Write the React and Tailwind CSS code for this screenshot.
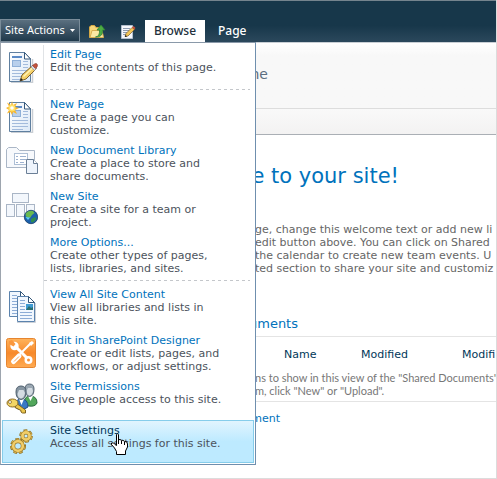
import React from "react";

const blue = "text-[#0072bc]";

function PageSheet({ x = 0, y = 0 }) {
  return (
    <g transform={`translate(${x} ${y})`}>
      <path d="M2 30.5H23.5V7" fill="none" stroke="#c9ced4" strokeWidth="1.5" />
      <path d="M.5.5H15.5L21.5 7V29.5H.5Z" fill="url(#sheet)" stroke="#5f7f9f" />
      <path d="M15.5.5V7H21.5Z" fill="#fff" stroke="#34577a" />
      <path d="M3 5H13" stroke="#5b8ac6" strokeWidth="2" />
      <rect x="3.5" y="8.5" width="8" height="6" fill="#b9d0ec" stroke="#8fb0d8" />
      <path d="M14 9.5H19M14 12.5H19M14 15.5H19M3 18.5H19M3 21.5H19M3 24.5H19M3 27.5H14" stroke="#a3bbdc" />
    </g>
  );
}

function EditPageIcon() {
  return (
    <svg width="32" height="32" viewBox="0 0 32 32" aria-hidden="true">
      <defs>
        <linearGradient id="sheet" x1="0" y1="0" x2="1" y2="1">
          <stop offset="0" stopColor="#ffffff" />
          <stop offset="1" stopColor="#dce9f7" />
        </linearGradient>
      </defs>
      <PageSheet x={3} y={1} />
      <path d="M14 30L16 24L27 14L30.500 17.500L20 28Z" fill="#f5d069" stroke="#80622c" />
      <path d="M17.500 25.500L27.500 16" stroke="#fff3b4" strokeWidth="1.500" />
      <path d="M25 16L27 14L30.500 17.500L28.500 19.500Z" fill="#d9dce2" stroke="#8a8c92" strokeWidth=".6" />
      <path d="M26.500 14.500L28.500 13Q30 12 31 13T31 16L29.500 17.500Z" fill="#c6533c" stroke="#8a3c30" strokeWidth=".7" />
      <path d="M14 30L15 27L17 29Z" fill="#222" />
    </svg>
  );
}

function NewPageIcon() {
  return (
    <svg width="32" height="32" viewBox="0 0 32 32" aria-hidden="true">
      <PageSheet x={3} y={1} />
      <path d="M6 0L7 4L11 2L9 6L13 7L9 9L11 13L7 11L6 14L4.500 11L1 12.500L3 9L0 7L3 5.500L1 1.500L5 4Z" fill="#f8b62c" />
      <circle cx="6" cy="7" r="3.500" fill="#ffe169" />
      <circle cx="6" cy="7" r="1.800" fill="#fff" />
    </svg>
  );
}

function LibraryIcon() {
  return (
    <svg width="32" height="32" viewBox="0 0 32 32" aria-hidden="true">
      <path d="M.5 20.500V2.500L2.500 .5H10.500L13.500 3.500H28.500V20.500Z" fill="#f7f9fc" stroke="#aab6c6" />
      <rect x="8.500" y="6.500" width="13" height="11" fill="#fff" stroke="#aebfd5" />
      <path d="M10 9.500H12M10 12.500H12M10 15.500H12M14 9.500H20M14 12.500H20M14 15.500H18" stroke="#9db2d0" />
      <path d="M20.500 12.500H27.500L31.500 16.500V26.500H20.500Z" fill="#eef4fc" stroke="#6b7f96" />
      <path d="M27.500 12.500V16.500H31.500" fill="#fff" stroke="#6b7f96" />
    </svg>
  );
}

function NewSiteIcon() {
  return (
    <svg width="32" height="32" viewBox="0 0 32 32" aria-hidden="true">
      <g fill="#f3f7fc" stroke="#aab6c6">
        <rect x="6.500" y=".5" width="16" height="9" />
        <rect x=".5" y="11.500" width="8" height="12" />
        <rect x="10.500" y="11.500" width="8" height="12" />
        <rect x="20.500" y="11.500" width="8" height="12" />
      </g>
      <circle cx="25" cy="24" r="6.700" fill="#1c61ad" stroke="#173c66" strokeWidth=".8" />
      <path d="M20 20Q23 17 27 18L28.500 20L26 22L24 25L20.500 24L19.500 22Z" fill="#69b94f" />
      <path d="M25 26L29 24L30.500 26L27 29.500L25 29Z" fill="#2f8c4e" />
      <path d="M19.500 24L24 24.500L22 27Z" fill="#5fd0f0" />
    </svg>
  );
}

function ContentIcon() {
  const sheet = (
    <>
      <path d="M.5.5H11.500L17.500 6.500V25.500H.5Z" fill="#f1f7fe" stroke="#5b83ad" />
      <path d="M11.500.5V6.500H17.500Z" fill="#fff" stroke="#34577a" />
      <path d="M3 4.500H8M3 7.500H8M3 10.500H8M3 13.500H8M3 16.500H15M3 19.500H15M3 22.500H15" stroke="#8cacd6" />
      <rect x="9" y="8" width="7" height="6" fill="#3e9bd2" />
      <path d="M9 14L12 10L14 12L16 11V14Z" fill="#2b6f70" />
    </>
  );
  return (
    <svg width="32" height="32" viewBox="0 0 32 32" aria-hidden="true">
      <path d="M11 31.500H29.500V12" fill="none" stroke="#ccd1d8" />
      <g transform="translate(3 0)">{sheet}</g>
      <g transform="translate(11 5)">{sheet}</g>
    </svg>
  );
}

function DesignerIcon() {
  return (
    <svg width="32" height="32" viewBox="0 0 32 32" aria-hidden="true">
      <defs>
        <linearGradient id="orange" x1="0" y1="0" x2="0" y2="1">
          <stop offset="0" stopColor="#ffb45c" />
          <stop offset=".5" stopColor="#f7892b" />
          <stop offset="1" stopColor="#ffab52" />
        </linearGradient>
      </defs>
      <rect x=".5" y="1.500" width="29" height="29" rx="2" fill="url(#orange)" stroke="#e6852f" />
      <path d="M9 9L22 22" stroke="#fff" strokeWidth="3" />
      <circle cx="8.500" cy="9" r="4.200" fill="#fff" />
      <path d="M3 4L6 3L9.500 7L7.500 9.500L3 7Z" fill="#fa983f" />
      <circle cx="22.500" cy="23" r="4" fill="#fff" />
      <circle cx="22.500" cy="23" r="1.500" fill="#f7923a" />
      <path d="M25 6L14 17" stroke="#fff" strokeWidth="2" />
      <path d="M23 6L26 4L28 6L25 9Z" fill="#fff" />
      <path d="M13 19L7.500 24.500" stroke="#fff" strokeWidth="5" strokeLinecap="round" />
      <path d="M13 19.500L8 24.500" stroke="#f7a258" />
    </svg>
  );
}

function PermissionsIcon() {
  return (
    <svg width="32" height="32" viewBox="0 0 32 32" aria-hidden="true">
      <path d="M18 21Q18 13 24 13Q31 13 31 20Q29 24 23 23Z" fill="#52a75b" stroke="#2d6c42" />
      <path d="M22 13L24.500 18L27 13Z" fill="#fff" />
      <path d="M19 6Q19 1 23.500 1Q28 1 28 6Q28 13 23.500 13.500Q19 13 19 6Z" fill="#9aa7b2" stroke="#536270" />
      <path d="M20.500 8L22 5H26L27 8Q26 12 23.500 12.500Q21 12 20.500 8Z" fill="#d3dbe1" />
      <path d="M9 24Q9 16 15 16Q22 16 22 24Q18 28 12 26Z" fill="#3978c4" stroke="#23508c" />
      <path d="M13 16L15.500 22L18 16Z" fill="#fff" />
      <path d="M10 9Q10 3 15 3Q20 3 20 9Q20 16 15 16.500Q10 16 10 9Z" fill="#8796a2" stroke="#4c5d6c" />
      <path d="M11.500 11L13 7H17.500L19 10Q18 15 15 15.500Q12 15 11.500 11Z" fill="#d4dce2" />
      <path d="M10 20L19.500 27V30H16.500L15 29V27.500L13 26.500L9 24.500Z" fill="#eac64e" stroke="#806420" />
      <ellipse cx="6.500" cy="20" rx="5.500" ry="4" fill="#f2d565" stroke="#8d6b22" />
      <circle cx="4" cy="19" r="1.500" fill="#fff" stroke="#8d6b22" strokeWidth=".8" />
    </svg>
  );
}

function Gear({ x, y, r }) {
  return (
    <g transform={`translate(${x} ${y})`}>
      <circle r={r + 1.5} fill="none" stroke="#8f7226" strokeWidth="3.500" strokeDasharray="3.300 2" />
      <circle r={r + 1.3} fill="none" stroke="#eec65b" strokeWidth="2.500" strokeDasharray="2.600 2.650" strokeDashoffset="-.3" />
      <circle r={r} fill="none" stroke="#967728" strokeWidth="4" />
      <circle r={r} fill="none" stroke="#f1cd68" strokeWidth="2.700" />
    </g>
  );
}

function SettingsIcon() {
  return (
    <svg width="32" height="32" viewBox="0 0 32 32" aria-hidden="true">
      <Gear x={20} y={10} r={3.6} />
      <Gear x={12} y={20} r={4.8} />
    </svg>
  );
}

function FolderUpIcon() {
  return (
    <svg width="17" height="16" viewBox="0 0 17 16" aria-hidden="true">
      <path d="M.5 13.500V3L2 1.500H5.500L7 3.500H13.500V13.500Z" fill="#f6d77a" stroke="#d5a845" />
      <path d="M1 13.500L3 6.500H13L14.500 13.500Z" fill="#fbe8a4" stroke="#d8ae50" />
      <path d="M6.500 13Q11 12.500 10.500 6H8L12 1L16 6H13.500Q14 13.500 6.500 13Z" fill="#4dad43" stroke="#2e8038" strokeWidth=".8" />
    </svg>
  );
}

function EditIcon() {
  return (
    <svg width="16" height="16" viewBox="0 0 16 16" aria-hidden="true">
      <path d="M1.500 1.500H12.500V14.500H1.500Z" fill="#f5f8fc" stroke="#b3bfce" />
      <path d="M3 4.500H10M3 6.500H9M3 8.500H7M3 10.500H6" stroke="#8d9bb0" />
      <path d="M5 12.500L6 9.500L12 3.500L14.500 5.500L8 12Z" fill="#f2c557" stroke="#795d30" strokeWidth=".7" />
      <path d="M12 3.500L13.500 2L15.500 4L14 5.500Z" fill="#c6533c" />
      <path d="M5 13L5.500 11L7 12.500Z" fill="#111" />
    </svg>
  );
}

function HandPointer() {
  return (
    <svg className="pointer-events-none absolute left-[110px] top-[390px]" width="17" height="22" viewBox="0 0 17 22" aria-hidden="true">
      <path d="M5.500 1.500Q6.500 0 7.500 1.500V7Q9 5.500 10.500 7.500Q12 6.500 13.500 8.500Q16.500 8 16.500 11V14L14.500 18V21.500H5.500V18.500L3.500 15L.5 11.500V10Q2.500 9 4 11.500L5.500 12.500Z" fill="#fff" stroke="#000" />
      <path d="M7.500 7V11M10.500 8V11M13.500 9V12" stroke="#000" />
    </svg>
  );
}

const groups = [
  [{ title: "Edit Page", text: "Edit the contents of this page.", Icon: EditPageIcon }],
  [
    { title: "New Page", text: "Create a page you can customize.", Icon: NewPageIcon },
    { title: "New Document Library", text: "Create a place to store and share documents.", Icon: LibraryIcon },
    { title: "New Site", text: "Create a site for a team or project.", Icon: NewSiteIcon },
    { title: "More Options...", text: "Create other types of pages, lists, libraries, and sites." },
  ],
  [
    { title: "View All Site Content", text: "View all libraries and lists in this site.", Icon: ContentIcon },
    { title: "Edit in SharePoint Designer", text: "Create or edit lists, pages, and workflows, or adjust settings.", Icon: DesignerIcon },
    { title: "Site Permissions", text: "Give people access to this site.", Icon: PermissionsIcon },
    { title: "Site Settings", text: "Access all settings for this site.", Icon: SettingsIcon, active: true },
  ],
];

function MenuItem({ title, text, Icon, active }) {
  return (
    <a
      href="#"
      className={
        "flex min-h-[43px] " +
        (active
          ? "bg-linear-to-b from-[#e3f5fe] to-[#bdeaff] to-50% outline outline-1 -outline-offset-1 outline-[#86cdeb]"
          : "")
      }
    >
      <span className={"w-[42px] shrink-0 pl-1 pt-[6px] " + (active ? "" : "border-r border-[#e0e3e6]")}>
        {Icon && <Icon />}
      </span>
      <span className={"block w-[180px] pb-1 pl-[6px] " + (active ? "pt-1" : "pt-[3px]")}>
        <span className={"block whitespace-nowrap " + (active ? "text-[#003759]" : blue)}>{title}</span>
        <span className="block text-[#4c535c]">{text}</span>
      </span>
    </a>
  );
}

function SiteMenu() {
  return (
    <nav
      aria-label="Site Actions"
      className="absolute left-0 top-full z-10 w-64 border border-[#6f8fae] border-l-[#9da5ae] border-t-[#8a99a9] bg-white px-px pb-px pt-[2px] text-[11px] leading-[13px]"
    >
      {groups.map((items, i) => (
        <div key={i}>
          {i > 0 && (
            <div className={"flex " + (i === 1 ? "h-[7px]" : "h-[6px]")}>
              <span className="w-[42px] border-r border-[#e0e3e6]" />
              <span className="mr-1 mt-px h-px flex-1 bg-[repeating-linear-gradient(90deg,#c4c7cb_0_3px,transparent_3px_6px)]" />
            </div>
          )}
          {items.map((item) => (
            <MenuItem key={item.title} {...item} />
          ))}
        </div>
      ))}
      <HandPointer />
    </nav>
  );
}

export default function App() {
  return (
    <div className="flex min-h-screen flex-col overflow-hidden border-b border-r border-[#dcdcdc] bg-white font-['DejaVu_Sans',Verdana,sans-serif] text-[11px] leading-[13px]">
      <header className="relative flex h-[42px] items-end border-t border-[#75848e] bg-linear-to-b from-[#17374a] from-60% to-[#2b485c] font-['Noto_Sans','Segoe_UI',sans-serif] text-xs text-white">
        <button className="flex h-[23px] w-20 items-center justify-between whitespace-nowrap border border-[#7b8d9a] bg-linear-to-b from-[#5b7080] to-[#20394b] px-1 text-[11px]">
          Site Actions
          <svg className="shrink-0" width="5" height="3" viewBox="0 0 5 3" aria-hidden="true">
            <path d="M0 0H5L2.500 3Z" fill="#fff" />
          </svg>
        </button>
        <button aria-label="Navigate up" className="ml-[9px] pb-[2px]">
          <FolderUpIcon />
        </button>
        <button aria-label="Edit" className="ml-[14px] pb-[2px]">
          <EditIcon />
        </button>
        <button className="ml-[9px] h-[22px] w-[60px] bg-white font-medium text-[#22303c]">Browse</button>
        <button className="ml-[13px] h-[22px] font-medium">Page</button>
        <div className="absolute inset-x-0 bottom-0 font-['DejaVu_Sans',Verdana,sans-serif]">
          <SiteMenu />
        </div>
      </header>
      <div className="h-[67px] border-y border-b-[#dddddd] border-t-[#c9cfd5] bg-linear-to-b from-white to-[#f8f8f8] to-20% pt-[23px]">
        <p className="w-[268px] text-right text-sm leading-4 text-[#5c6f80]">ne</p>
      </div>
      <div className="h-[26px] border-b border-[#aaafb5] bg-linear-to-b from-[#f9f9f9] to-[#f3f2f2]" />
      <main className="whitespace-nowrap">
        <h1 className={"mt-[27px] w-[399px] text-right text-[21px] leading-7 " + blue}>e to your site!</h1>
        <p className="mt-[33px] overflow-hidden pl-[255px] text-[#666666]">
          ge, change this welcome text or add new li
          <br />
          edit button above. You can click on Shared
          <br />
          the calendar to create new team events. U
          <br />
          ted section to share your site and customiz
        </p>
        <h2 className={"mt-[41px] w-[298px] pb-1 text-right text-[13px] leading-4 " + blue}>uments</h2>
        <table className="ml-[255px] w-[242px] table-fixed border-y border-[#e4e4e4] text-left">
          <thead>
            <tr className="h-[34px] text-[#003759]">
              <th className="w-[106px] pl-[29px] pt-[2px] font-normal">Name</th>
              <th className="w-[101px] pt-[2px] font-normal">Modified</th>
              <th className="pt-[2px] font-normal">Modifi</th>
            </tr>
          </thead>
          <tbody>
            <tr>
              <td colSpan={3} className="pb-1 font-[Lato,Tahoma,sans-serif] text-[#777777]">
                ns to show in this view of the "Shared Documents"
                <br />
                m, click "New" or "Upload".
              </td>
            </tr>
          </tbody>
        </table>
        <p className="mt-[10px] w-[280px] text-right">
          <a href="#" className={blue}>ment</a>
        </p>
      </main>
    </div>
  );
}
